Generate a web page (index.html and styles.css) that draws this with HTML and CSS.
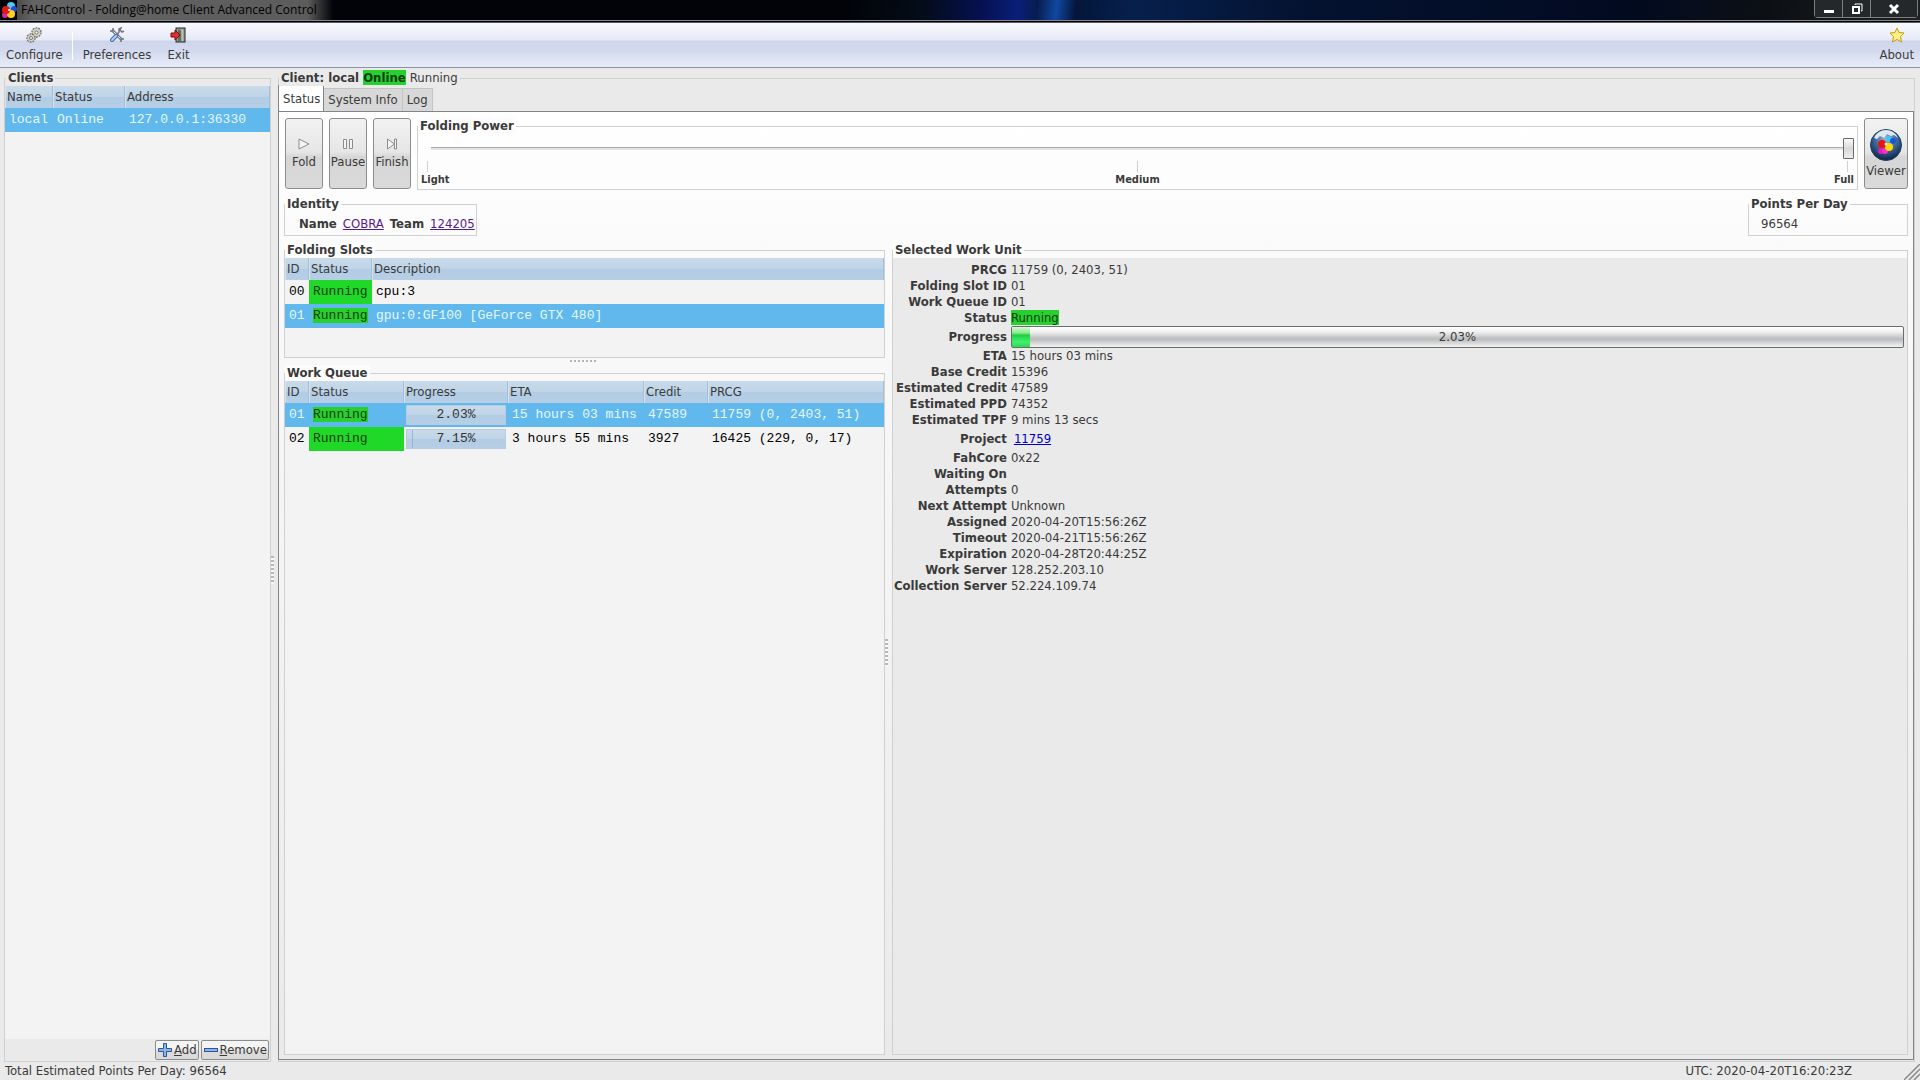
FILE: index.html
```html
<!DOCTYPE html>
<html lang="en">
<head>
<meta charset="utf-8">
<title>FAHControl - Folding@home Client Advanced Control</title>
<link rel="stylesheet" href="styles.css">
</head>
<body>
<header class="titlebar">
  <svg class="app-icon" viewBox="0 0 16 16" aria-hidden="true">
    <circle cx="10" cy="4" r="4" fill="#4fc8f4"/><circle cx="13" cy="7" r="3" fill="#1b4fd0"/>
    <circle cx="4" cy="13" r="3" fill="#e020a0"/><circle cx="10" cy="12" r="4" fill="#ffd21c"/>
    <circle cx="5" cy="8" r="4" fill="#e01818"/><circle cx="8" cy="8" r="1" fill="#fff"/>
  </svg>
  <h1 class="window-title">FAHControl - Folding@home Client Advanced Control</h1>
  <div class="window-buttons">
    <button class="win-btn" aria-label="Minimize"><svg viewBox="0 0 12 12"><rect x="1" y="7" width="10" height="3" fill="#fff"/></svg></button>
    <button class="win-btn" aria-label="Restore"><svg viewBox="0 0 12 12"><path d="M4 2V1h7v7h-1" fill="none" stroke="#fff"/><rect x="2" y="4" width="6" height="6" fill="none" stroke="#fff" stroke-width="2"/></svg></button>
    <button class="win-btn win-close" aria-label="Close"><svg viewBox="0 0 12 12"><path d="M2 2l8 8M10 2l-8 8" stroke="#fff" stroke-width="3"/></svg></button>
  </div>
</header>

<nav class="toolbar">
  <button class="tool">
    <svg viewBox="0 0 16 16"><g fill="#d0d0c8" stroke="#74746c"><circle cx="10.500" cy="5.500" r="4.500" stroke-width="1.500" stroke-dasharray="1.800 1"/><circle cx="10.500" cy="5.500" r="3.800" stroke="none"/><circle cx="10.500" cy="5.500" r="1.500" fill="#fff"/><circle cx="5" cy="11" r="4" stroke-width="1.500" stroke-dasharray="1.800 1"/><circle cx="5" cy="11" r="3.300" stroke="none"/><circle cx="5" cy="11" r="1.500" fill="#fff"/></g></svg>
    Configure
  </button>
  <span class="tool-divider"></span>
  <button class="tool tool-wide">
    <svg viewBox="0 0 16 16"><path d="M3 3l10 10" stroke="#70777f" stroke-width="3"/><path d="M3 3l10 10" stroke="#e4e8ec"/><path d="M1 4h3V1M15 12h-3v3" fill="none" stroke="#70777f" stroke-width="1.500"/><path d="M15 4l-2 1-2-2 1-2-2 1v3L8 8" fill="none" stroke="#70777f" stroke-width="1.500"/><path d="M7 9l-4 4" stroke="#3f6fae" stroke-width="4" stroke-linecap="round"/><path d="M7 9l-4 4" stroke="#b4d0f2" stroke-width="2" stroke-linecap="round"/></svg>
    Preferences
  </button>
  <button class="tool">
    <svg viewBox="0 0 16 16"><rect x="6" y="1" width="9" height="14" fill="#9aa59a" stroke="#222"/><path d="M8 2l4 2v10l-4 0z" fill="#5e6e60"/><path d="M12 3v11" stroke="#dfe6df"/><path d="M1 6h4V3l5 5-5 5v-3H1z" fill="#e03030" stroke="#7c0a0a"/></svg>
    Exit
  </button>
  <button class="tool tool-end">
    <svg viewBox="0 0 16 16"><path d="M8 1l2 4.500 5 .5-3.500 3.500 1 5.500L8 12.500 3.500 15l1-5.500L1 6l5-.5z" fill="#fdf08a" stroke="#c4a000" stroke-linejoin="round"/></svg>
    About
  </button>
</nav>

<main class="workspace">
  <section class="frame clients">
    <h2 class="frame-title">Clients</h2>
    <div class="list">
      <table class="grid">
        <colgroup><col class="w-client-name"><col class="w-client-status"><col></colgroup>
        <thead><tr><th>Name</th><th>Status</th><th>Address</th></tr></thead>
        <tbody><tr class="selected"><td>local</td><td>Online</td><td>127.0.0.1:36330</td></tr></tbody>
      </table>
    </div>
    <div class="client-actions">
      <button class="small-btn"><svg viewBox="0 0 14 14"><path d="M5.500.5h3v5h5v3h-5v5h-3v-5h-5v-3h5z" fill="#8db4e3" stroke="#2b5797"/></svg><span><u>A</u>dd</span></button>
      <button class="small-btn"><svg viewBox="0 0 14 14"><rect x="0.500" y="5.500" width="13" height="3" fill="#8db4e3" stroke="#2b5797"/></svg><span><u>R</u>emove</span></button>
    </div>
  </section>

  <div class="splitter splitter-v"><i class="grip"></i></div>

  <section class="frame client">
    <h2 class="frame-title">Client: local <mark>Online</mark> <span class="plain">Running</span></h2>
    <div class="tabs" role="tablist">
      <button class="tab active" role="tab" aria-selected="true">Status</button>
      <button class="tab" role="tab" aria-selected="false">System Info</button>
      <button class="tab" role="tab" aria-selected="false">Log</button>
    </div>
    <div class="page">
      <div class="controls">
        <button class="big-btn"><svg viewBox="0 0 12 12"><path d="M1 1l10 5-10 5z" fill="#f4f4f4" stroke="#8c8c8c"/></svg>Fold</button>
        <button class="big-btn"><svg viewBox="0 0 12 12"><path d="M1.500 1.500h3v9h-3zM7.500 1.500h3v9h-3z" fill="#f4f4f4" stroke="#8c8c8c"/></svg>Pause</button>
        <button class="big-btn"><svg viewBox="0 0 12 12"><path d="M1.500 1l7 5-7 5zM8.500 1h2v10h-2z" fill="#f4f4f4" stroke="#8c8c8c"/></svg>Finish</button>
        <section class="frame power">
          <label class="frame-title" for="power">Folding Power</label>
          <input class="slider" id="power" type="range" min="0" max="100" value="100">
          <div class="ticks"><span>Light</span><span>Medium</span><span>Full</span></div>
        </section>
        <button class="big-btn viewer">
          <svg viewBox="0 0 32 32"><defs><radialGradient id="globe" cx=".5" cy=".3" r=".7"><stop offset="0" stop-color="#9cb8d4"/><stop offset=".5" stop-color="#3c6a9e"/><stop offset="1" stop-color="#0b2140"/></radialGradient></defs>
            <circle cx="16" cy="16" r="15.500" fill="url(#globe)" stroke="#24405f"/>
            <path d="M4 9Q8 1 16 1t12 8l-4-3-3 1-4-2-3 4-4-2-3 3z" fill="#dfe8ee"/>
            <circle cx="19" cy="10" r="3" fill="#3cc8f0"/><circle cx="23" cy="12" r="3" fill="#1c54d8"/><circle cx="11" cy="22" r="3" fill="#e818c0"/><circle cx="15" cy="22" r="3" fill="#f030c8"/><circle cx="19" cy="18" r="4" fill="#ffd800"/><circle cx="12" cy="15" r="4" fill="#e81414"/><circle cx="16" cy="15" r="1.500" fill="#fff0c0"/></svg>
          Viewer
        </button>
      </div>

      <div class="summary">
        <section class="frame identity">
          <h3 class="frame-title">Identity</h3>
          <p class="identity-line"><b>Name</b><a class="visited" href="#cobra">COBRA</a><b>Team</b><a class="visited" href="#team">124205</a></p>
        </section>
        <section class="frame ppd">
          <h3 class="frame-title">Points Per Day</h3>
          <p class="ppd-value">96564</p>
        </section>
      </div>

      <div class="panes">
        <div class="left-pane">
          <section class="frame slots">
            <h3 class="frame-title">Folding Slots</h3>
            <div class="list">
              <table class="grid">
                <colgroup><col class="w-id"><col class="w-slot-status"><col></colgroup>
                <thead><tr><th>ID</th><th>Status</th><th>Description</th></tr></thead>
                <tbody>
                  <tr><td>00</td><td class="run">Running</td><td>cpu:3</td></tr>
                  <tr class="selected"><td>01</td><td><mark>Running</mark></td><td>gpu:0:GF100 [GeForce GTX 480]</td></tr>
                </tbody>
              </table>
            </div>
          </section>
          <div class="splitter splitter-h"><i class="grip grip-h"></i></div>
          <section class="frame queue">
            <h3 class="frame-title">Work Queue</h3>
            <div class="list">
              <table class="grid">
                <colgroup><col class="w-id"><col class="w-status"><col class="w-progress"><col class="w-eta"><col class="w-credit"><col></colgroup>
                <thead><tr><th>ID</th><th>Status</th><th>Progress</th><th>ETA</th><th>Credit</th><th>PRCG</th></tr></thead>
                <tbody>
                  <tr class="selected"><td>01</td><td><mark>Running</mark></td><td class="cell-bar"><div class="bar"><span>2.03%</span></div></td><td>15 hours 03 mins</td><td>47589</td><td>11759 (0, 2403, 51)</td></tr>
                  <tr><td>02</td><td class="run">Running</td><td class="cell-bar"><div class="bar"><i style="width:6%"></i><span>7.15%</span></div></td><td>3 hours 55 mins</td><td>3927</td><td>16425 (229, 0, 17)</td></tr>
                </tbody>
              </table>
            </div>
          </section>
        </div>

        <div class="splitter splitter-v"><i class="grip"></i></div>

        <section class="frame unit">
          <h3 class="frame-title">Selected Work Unit</h3>
          <dl class="details">
            <dt>PRCG</dt><dd>11759 (0, 2403, 51)</dd>
            <dt>Folding Slot ID</dt><dd>01</dd>
            <dt>Work Queue ID</dt><dd>01</dd>
            <dt>Status</dt><dd><mark>Running</mark></dd>
            <dt class="tall">Progress</dt><dd class="tall"><div class="progress"><i style="width:2.03%"></i><span>2.03%</span></div></dd>
            <dt>ETA</dt><dd>15 hours 03 mins</dd>
            <dt>Base Credit</dt><dd>15396</dd>
            <dt>Estimated Credit</dt><dd>47589</dd>
            <dt>Estimated PPD</dt><dd>74352</dd>
            <dt>Estimated TPF</dt><dd>9 mins 13 secs</dd>
            <dt class="tall">Project</dt><dd class="tall"><a class="project" href="#11759">11759</a></dd>
            <dt>FahCore</dt><dd>0x22</dd>
            <dt>Waiting On</dt><dd></dd>
            <dt>Attempts</dt><dd>0</dd>
            <dt>Next Attempt</dt><dd>Unknown</dd>
            <dt>Assigned</dt><dd>2020-04-20T15:56:26Z</dd>
            <dt>Timeout</dt><dd>2020-04-21T15:56:26Z</dd>
            <dt>Expiration</dt><dd>2020-04-28T20:44:25Z</dd>
            <dt>Work Server</dt><dd>128.252.203.10</dd>
            <dt>Collection Server</dt><dd>52.224.109.74</dd>
          </dl>
        </section>
      </div>
    </div>
  </section>
</main>

<footer class="statusbar">
  <span>Total Estimated Points Per Day: 96564</span>
  <span class="utc">UTC: 2020-04-20T16:20:23Z</span>
  <svg class="resize" viewBox="0 0 16 16" aria-hidden="true"><path d="M0 16L16 0M5 16L16 5M10 16l6-6" stroke="#8a8a8a" stroke-width="1.500"/></svg>
</footer>
</body>
</html>
```
FILE: styles.css
```css
* { box-sizing: border-box; }
html, body { height: 100%; margin: 0; }
body {
  display: flex;
  flex-direction: column;
  background: #eaeaea;
  color: #3a3a3a;
  font: 13px/16px "DejaVu Sans Condensed", "DejaVu Sans", sans-serif;
}
h1, h2, h3, p, dl, dd { margin: 0; font-size: 13px; }
button { font: inherit; color: inherit; padding: 0; }
svg { display: block; flex: none; }
mark { background: #27d02f; color: #0e3d10; }

/* Title bar */
.titlebar {
  display: flex;
  align-items: center;
  flex: none;
  height: 23px;
  padding-bottom: 3px;
  border-bottom: 1px solid #555a66;
  background:
    linear-gradient(#84868c, #84868c) 0 20px / 100% 1px no-repeat,
    linear-gradient(#000, #000) 0 21px / 100% 1px no-repeat,
    linear-gradient(97deg, #020308 0, #020308 44%, #030c18 48%, #061050 51%, #0a1e78 53%, #081c50 54%, #1048a0 55%, #04163a 56%, #06204c 59%, #041230 68%, #020a20 85%, #0c1014 92%, #1c2022 100%);
}
.app-icon { width: 16px; height: 16px; margin-left: 1px; }
.window-title {
  padding: 0 16px 0 4px;
  background: linear-gradient(90deg, #4c4c4c 0, #646464 16px, #5c5c5c 92%, transparent 100%);
  color: #000;
  font: 12px/20px "Open Sans", "Noto Sans", sans-serif;
}
.window-buttons { display: flex; align-self: flex-start; height: 18px; margin: 0 2px 0 auto; border: 1px solid #7c7f82; border-top: 0; border-radius: 0 0 4px 4px; }
.win-btn { display: flex; align-items: center; justify-content: center; width: 28px; border: 0; border-right: 1px solid #7c7f82; background: #24282a; }
.win-btn svg { width: 12px; height: 12px; }
.win-close { width: 46px; border-right: 0; }

/* Toolbar */
.toolbar {
  display: flex;
  align-items: flex-start;
  flex: none;
  height: 45px;
  padding: 4px 6px 0;
  border-bottom: 1px solid #8a93a8;
  background: linear-gradient(#f8f9fd 0, #e6eaf6 17px, #ced5ea 18px, #d4daee 28px, #e8ecf8 44px);
}
.tool { display: flex; flex-direction: column; align-items: center; gap: 4px; border: 0; background: none; }
.tool svg { width: 16px; height: 16px; }
.tool-wide { margin: 0 16px 0 10px; }
.tool-end { margin-left: auto; }
.tool-divider { width: 1px; height: 28px; margin: 5px 0 0 9px; background: #fff; }

/* Frames: a border whose top edge is broken by a title */
.frame { position: relative; display: flex; flex-direction: column; min-width: 0; border: 1px solid #d0d0d0; }
.frame-title {
  position: absolute;
  top: -9px;
  left: 0;
  z-index: 1;
  padding: 0 2px;
  background: var(--surface, #eaeaea);
  font-weight: bold;
  line-height: 16px;
  white-space: nowrap;
}
.plain { font-weight: normal; }

/* Workspace */
.workspace { display: flex; flex: 1; min-height: 0; padding: 10px 5px 0 4px; }
.clients { flex: none; width: 267px; }
.clients .frame-title { left: 1px; }
.client { flex: 1; }
.list { flex: 1; min-height: 0; background: #f3f3f3; }
.clients .list { margin-top: 7px; }
.client-actions { display: flex; justify-content: flex-end; gap: 2px; height: 22px; padding: 1px 1px 0; }
.small-btn {
  display: flex;
  align-items: center;
  gap: 2px;
  height: 20px;
  padding: 0 1px 0 2px;
  border: 1px solid #8c8c8c;
  border-radius: 2px;
  background: linear-gradient(#f4f4f4 0 40%, #dadada 60%);
}
.small-btn svg { width: 14px; height: 14px; }

.splitter { display: flex; align-items: center; flex: none; }
.splitter-v { width: 7px; }
.splitter-h { height: 15px; align-items: flex-start; justify-content: center; padding-top: 2px; }
.grip { width: 3px; height: 28px; background: repeating-linear-gradient(#b8b8b4 0 2px, #f8f8f8 2px 4px); }
.grip-h { width: 28px; height: 2px; background: repeating-linear-gradient(90deg, #b4b4b0 0 2px, transparent 2px 4px); }

/* Tables */
.grid { width: 100%; border-collapse: separate; border-spacing: 0; table-layout: fixed; }
.grid th {
  height: 22px;
  padding: 0 0 0 1px;
  border-right: 1px solid #a4bedb;
  border-left: 1px solid #d4e2f0;
  background: linear-gradient(#c9dbe9 0, #bfd4e8 50%, #b2cce4 51%, #b6cfe6 100%);
  font-weight: normal;
  text-align: left;
}
.grid td {
  height: 24px;
  padding: 0 0 0 4px;
  color: #000;
  font: 13px/16px "Liberation Mono", "Courier New", monospace;
  white-space: nowrap;
}
.grid .selected td { background: #60b8ec; color: #e4f8ff; }
.grid td.run { background: #20d828; color: #0c400c; }
.grid td.cell-bar { padding: 0 2px; }
.w-client-name { width: 48px; }
.w-client-status { width: 72px; }
.w-id { width: 24px; }
.w-slot-status { width: 63px; }
.w-status { width: 95px; }
.w-progress { width: 104px; }
.w-eta { width: 136px; }
.w-credit { width: 64px; }
.bar { position: relative; height: 20px; border: 1px solid #b8cbe0; background: linear-gradient(#c9dbe9 0, #bfd4e8 50%, #b2cce4 51%, #b6cfe6 100%); color: #333; text-align: center; line-height: 18px; }
.bar i { position: absolute; inset: 0 auto 0 0; border-right: 1px solid #9ab4d0; }

/* Tabs */
.tabs { display: flex; align-items: flex-end; height: 32px; margin-left: -1px; }
.tab { height: 23px; padding: 0 4px; border: 1px solid #c4c4c4; border-left: 0; border-bottom: 0; background: #d8d8d8; }
.tab.active { height: 26px; padding: 0 3px 0 4px; border: 1px solid #80858c; border-bottom: 0; background: #fff; }

.page {
  --surface: #fcfcfc;
  display: flex;
  flex: 1;
  flex-direction: column;
  min-height: 0;
  margin: 0 0 1px -1px;
  padding: 6px 5px 4px;
  border: 1px solid #80858c;
  background: linear-gradient(#fff, #fafafa 150px, #eaeaea 100%);
}

.controls { display: flex; gap: 6px; padding-left: 1px; }
.big-btn {
  display: flex;
  flex-direction: column;
  align-items: center;
  justify-content: center;
  gap: 4px;
  flex: none;
  width: 38px;
  height: 71px;
  border: 1px solid #8c8c8c;
  border-radius: 3px;
  background: linear-gradient(#f2f2f2 0, #e6e6e6 48%, #d6d6d6 55%, #dadada 100%);
}
.big-btn svg { width: 12px; height: 12px; }
.viewer { width: 44px; gap: 2px; }
.viewer svg { width: 32px; height: 32px; }

.power { flex: 1; height: 64px; margin-top: 8px; padding: 10px 3px 0; }
.slider { appearance: none; width: auto; height: 22px; margin: 0; background: linear-gradient(#a8a8a8 0 1px, #e4e4e4 1px 3px) 10px 10px / calc(100% - 20px) 3px no-repeat; }
.slider::-webkit-slider-thumb { appearance: none; width: 11px; height: 21px; border: 1px solid #6a6a6a; border-radius: 1px; background: linear-gradient(#fafafa, #d8d8d8 50%, #eee); }
.ticks { display: grid; grid-template-columns: 1fr auto 1fr; padding-top: 2px; font-weight: bold; font-size: 11px; }
.ticks span { display: flex; flex-direction: column; align-items: center; }
.ticks span::before { content: ""; width: 1px; height: 11px; background: #d0d0d0; }
.ticks span:first-child { align-items: flex-start; }
.ticks span:last-child { align-items: flex-end; }
.ticks span:first-child::before,
.ticks span:last-child::before { margin: 0 6px; }

.summary { display: flex; justify-content: space-between; margin-top: 14px; }
.summary .frame { height: 32px; padding-top: 11px; }
.identity { width: 193px; }
.identity-line { display: flex; gap: 6px; padding-left: 14px; }
.ppd { width: 160px; }
.ppd-value { padding-left: 12px; }
.visited { color: #551a8b; }
.project { margin-left: 3px; color: #00c; }

.panes { display: flex; flex: 1; min-height: 0; margin-top: 14px; }
.left-pane { display: flex; flex-direction: column; width: 37%; }
.slots { height: 108px; padding-top: 7px; }
.queue { flex: 1; padding-top: 7px; }
.unit { flex: 1; padding-top: 7px; }
.details {
  display: grid;
  grid-template-columns: 114px 1fr;
  align-content: start;
  column-gap: 4px;
  flex: 1;
  padding: 4px 3px 0 0;
  background: #eaeaea;
}
.details dt { display: flex; justify-content: flex-end; font-weight: bold; white-space: nowrap; }
.details dt, .details dd { height: 16px; }
.details .tall { height: 22px; line-height: 22px; }
.progress {
  position: relative;
  height: 22px;
  border: 1px solid #6c6c6c;
  border-radius: 2px;
  background: linear-gradient(#fff 0, #f0f0f0 25%, #b8babc 60%, #f4f4f4 100%);
  line-height: 20px;
  text-align: center;
}
.progress i { position: absolute; inset: 0 auto 0 0; background: linear-gradient(#d8f8d8 0, #8ce88c 30%, #20d040 40%, #40f070 75%, #30d850 100%); }
.progress span, .bar span { position: relative; }

.statusbar { display: flex; align-items: center; flex: none; height: 18px; padding-left: 5px; }
.utc { margin-left: auto; padding-right: 52px; }
.resize { align-self: flex-end; width: 16px; height: 16px; }
```
